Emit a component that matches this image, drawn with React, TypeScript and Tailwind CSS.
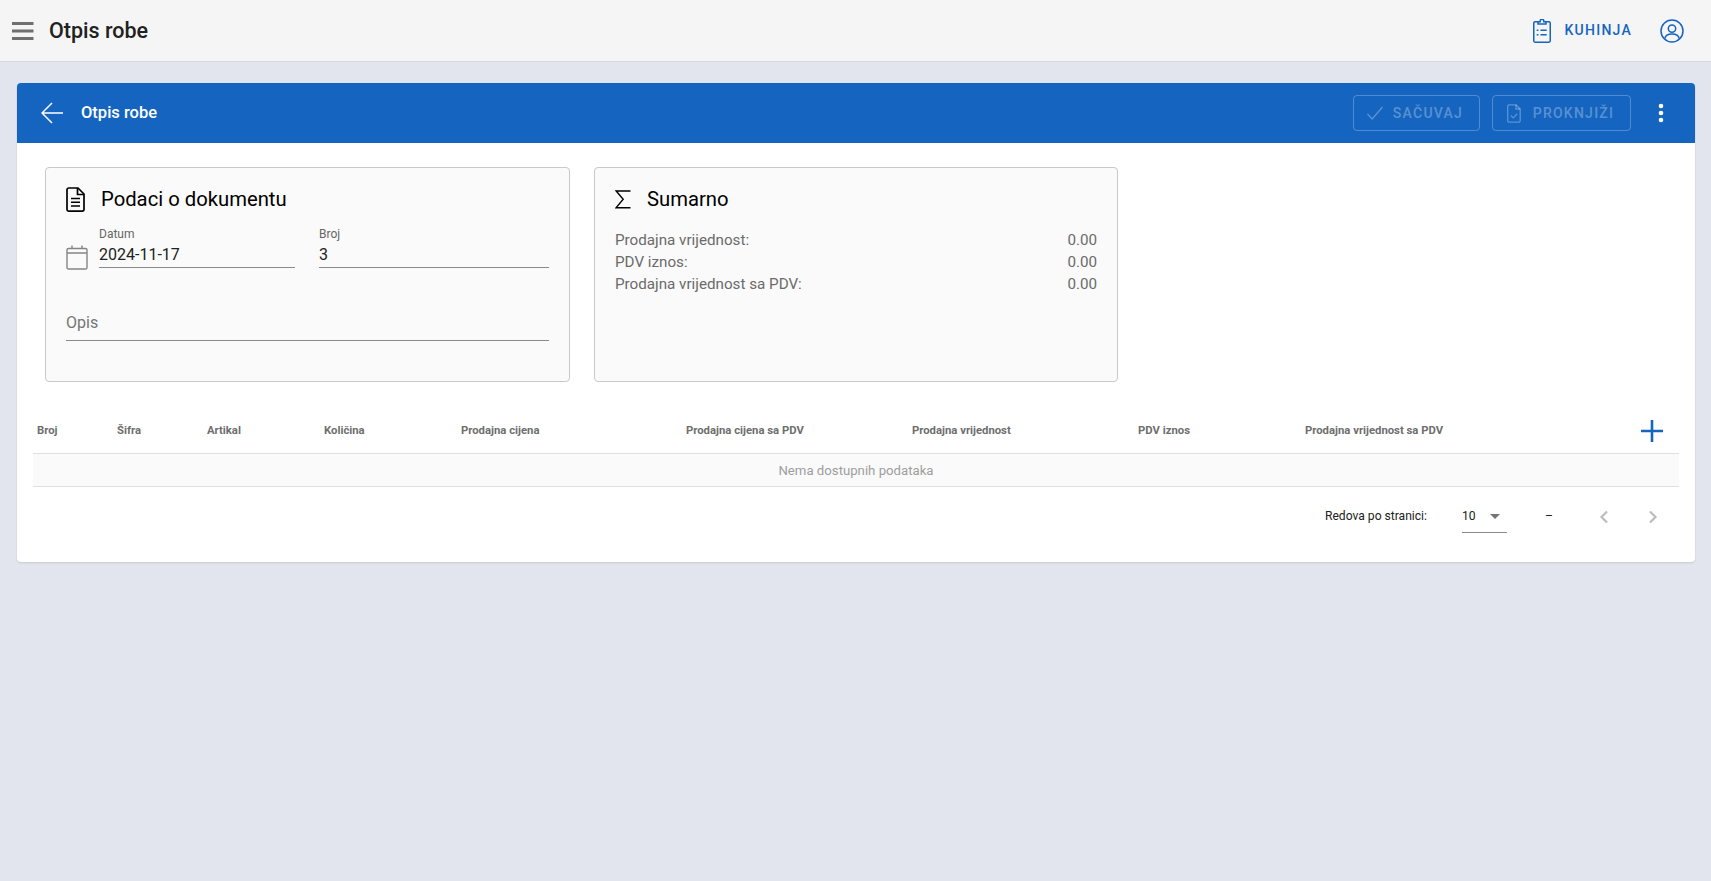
import React from "react";

const Hamburger = () => (
  <svg width="22" height="18" viewBox="0 0 22 18" className="shrink-0">
    <path d="M0 1.5h21.5M0 9h21.5M0 16.5h21.5" stroke="#6f6f6f" strokeWidth="3" fill="none" />
  </svg>
);

const ClipboardIcon = () => (
  <svg width="18" height="24" viewBox="0 0 18 24" fill="none" stroke="#1565c0" strokeWidth="1.5" className="shrink-0">
    <rect x="0.75" y="2.75" width="16.5" height="20.5" rx="1.4" />
    <path d="M5 2.75V5h8V2.75h-2.2V2a1.8 1.8 0 0 0-3.6 0v.75z" fill="#f5f5f5" />
    <path d="M7.5 11.2h6.2M7.5 15.8h6.2" />
    <path d="M3.7 11.2h1.7M3.7 15.8h1.7" />
  </svg>
);

const UserIcon = () => (
  <svg width="24" height="24" viewBox="0 0 24 24" fill="none" stroke="#1565c0" strokeWidth="1.5" className="shrink-0">
    <circle cx="12" cy="12" r="11" />
    <circle cx="12" cy="9.6" r="3.7" />
    <path d="M4.8 19.6c.5-3 3.4-4.6 7.2-4.6s6.7 1.6 7.2 4.6" />
  </svg>
);

const BackArrow = () => (
  <svg width="22" height="22" viewBox="0 0 22 22" fill="none" stroke="#ffffff" strokeWidth="1.5" className="shrink-0">
    <path d="M22 11H1M11 1L1 11l10 10" />
  </svg>
);

const CheckIcon = () => (
  <svg width="18" height="14" viewBox="0 0 18 14" fill="none" stroke="currentColor" strokeWidth="1.3" className="shrink-0">
    <path d="M1.5 8l4.7 5L16.5 1" />
  </svg>
);

const DocCheckIcon = () => (
  <svg width="14" height="19" viewBox="0 0 14 19" fill="none" stroke="currentColor" strokeWidth="1.3" className="shrink-0">
    <path d="M1.7.8H9l4.2 4.2v11.5a1.6 1.6 0 0 1-1.6 1.7H1.7A1.2 1.2 0 0 1 .7 17V2A1.2 1.2 0 0 1 1.7.8z" />
    <path d="M9 .8V5h4.2" />
    <path d="M3.8 11.5l2.4 2.4 4-4.2" />
  </svg>
);

const KebabIcon = () => (
  <svg width="6" height="20" viewBox="0 0 6 20" fill="#ffffff" className="shrink-0">
    <circle cx="3" cy="3" r="2.3" />
    <circle cx="3" cy="10" r="2.3" />
    <circle cx="3" cy="17" r="2.3" />
  </svg>
);

const DocIcon = () => (
  <svg width="19" height="25" viewBox="0 0 19 25" fill="none" stroke="#000000" strokeWidth="1.7" className="shrink-0">
    <path d="M2.6 1H12l6 6v15.2a1.9 1.9 0 0 1-1.9 1.9H2.6A1.7 1.7 0 0 1 1 22.4V2.6A1.7 1.7 0 0 1 2.6 1z" />
    <path d="M11.5 1v6.5H18" />
    <path d="M5 11.5h9M5 15.3h9M5 19h9" strokeWidth="1.5" />
  </svg>
);

const CalendarIcon = () => (
  <svg width="22" height="25" viewBox="0 0 22 25" fill="none" stroke="#858585" strokeWidth="1.4" className="shrink-0">
    <rect x="1" y="3.5" width="20" height="20.5" rx="1.6" />
    <path d="M1 8h20M6 .5v3M16 .5v3" />
  </svg>
);

const SigmaIcon = () => (
  <svg width="16" height="19" viewBox="0 0 16 19" fill="none" stroke="#000000" strokeWidth="1.4" className="shrink-0">
    <path d="M15.5 1H1.2l7 8.3L1 17.8h14.5" />
  </svg>
);

const PlusIcon = () => (
  <svg width="22" height="22" viewBox="0 0 22 22" fill="none" stroke="#1565c0" strokeWidth="2.6" className="shrink-0">
    <path d="M11 0v22M0 11h22" />
  </svg>
);

const Chevron = ({ dir }: { dir: "left" | "right" }) => (
  <svg width="9" height="14" viewBox="0 0 9 14" fill="none" stroke="#bdbdbd" strokeWidth="2.2" className="shrink-0">
    <path d={dir === "left" ? "M8 1.5L2.5 7l5.5 5.5" : "M1 1.5L6.5 7 1 12.5"} />
  </svg>
);

const columns = [
  "Broj",
  "Šifra",
  "Artikal",
  "Količina",
  "Prodajna cijena",
  "Prodajna cijena sa PDV",
  "Prodajna vrijednost",
  "PDV iznos",
  "Prodajna vrijednost sa PDV",
];

const summary = ["Prodajna vrijednost:", "PDV iznos:", "Prodajna vrijednost sa PDV:"];

export default function App() {
  return (
    <div className="min-h-screen bg-[#e2e5ee] font-['Roboto',sans-serif] overflow-hidden">
      <header className="h-[62px] bg-[#f5f5f5] border-b border-[#d6d8de] flex items-center pl-3 pr-[27px]">
        <Hamburger />
        <h1 className="ml-[15px] text-[21.5px] font-medium text-[#212121] leading-none">Otpis robe</h1>
        <div className="ml-auto flex items-center">
          <ClipboardIcon />
          <span className="ml-[14px] text-[14px] font-medium tracking-[1.25px] text-[#1565c0]">KUHINJA</span>
          <div className="ml-[28px]">
            <UserIcon />
          </div>
        </div>
      </header>

      <main className="ml-[17px] mr-4 mt-[21px] h-[479px] bg-white rounded-[4px] shadow-[0_1px_2px_rgba(0,0,0,0.12)]">
        <div className="h-[60px] bg-[#1565c0] rounded-t-[4px] flex items-center pl-[24px] pr-[31px]">
          <BackArrow />
          <span className="ml-[18px] text-[16.5px] font-medium text-white">Otpis robe</span>
          <div className="ml-auto flex items-center text-white/30">
            <button className="h-[36px] w-[127px] border border-white/25 rounded-[4px] flex items-center justify-center gap-[9px] pr-[4px] text-[14px] font-medium tracking-[1.25px]">
              <CheckIcon />
              <span>SAČUVAJ</span>
            </button>
            <button className="ml-3 h-[36px] w-[139px] border border-white/25 rounded-[4px] flex items-center justify-center gap-[12px] pr-[2px] text-[14px] font-medium tracking-[1.25px]">
              <DocCheckIcon />
              <span>PROKNJIŽI</span>
            </button>
            <div className="ml-[27px]">
              <KebabIcon />
            </div>
          </div>
        </div>

        <div className="flex gap-6 pl-[28px] pt-6">
          <section className="w-[525px] h-[215px] bg-[#fafafa] border border-[#c9c9c9] rounded-[4px] px-5">
            <div className="flex items-center mt-[18px] h-[26px]">
              <DocIcon />
              <h2 className="ml-[16px] text-[20.25px] text-black leading-none">Podaci o dokumentu</h2>
            </div>
            <div className="flex mt-[15px]">
              <div className="flex items-end w-[229px]">
                <div className="mb-[-2px]">
                  <CalendarIcon />
                </div>
                <div className="ml-[11px] w-[196px] border-b border-[#8a8a8a] h-[41px]">
                  <div className="text-[12px] leading-[14px] text-[#666666]">Datum</div>
                  <div className="text-[16px] leading-[24px] text-[#212121] mt-[2px]">2024-11-17</div>
                </div>
              </div>
              <div className="ml-[24px] w-[230px] border-b border-[#8a8a8a] h-[41px]">
                <div className="text-[12px] leading-[14px] text-[#666666]">Broj</div>
                <div className="text-[16px] leading-[24px] text-[#212121] mt-[2px]">3</div>
              </div>
            </div>
            <div className="mt-[39px] w-[483px] h-[34px] pt-[4px] border-b border-[#8a8a8a] text-[16px] leading-[24px] text-[#757575]">
              Opis
            </div>
          </section>

          <section className="w-[524px] h-[215px] bg-[#fafafa] border border-[#c9c9c9] rounded-[4px] px-5">
            <div className="flex items-center mt-[18px] h-[26px]">
              <SigmaIcon />
              <h2 className="ml-[16px] text-[20.25px] text-black leading-none">Sumarno</h2>
            </div>
            <div className="mt-[17px] text-[15.2px] leading-[22px] text-[#6b6b6b]">
              {summary.map((label) => (
                <div key={label} className="flex justify-between">
                  <span>{label}</span>
                  <span>0.00</span>
                </div>
              ))}
            </div>
          </section>
        </div>

        <div className="ml-[16px] mr-[16px] mt-[25px]">
          <div className="relative h-[47px] pt-[2px] border-b border-[#e0e0e0] grid grid-cols-[80px_90px_117px_137px_225px_226px_226px_167px_378px] items-center text-[11.3px] font-bold text-[#6e6e6e]">
            {columns.map((c) => (
              <div key={c} className="pl-1">
                {c}
              </div>
            ))}
            <div className="absolute right-[16px] top-[13px]">
              <PlusIcon />
            </div>
          </div>
          <div className="h-[33px] bg-[#fafafa] border-b border-[#e0e0e0] flex items-center justify-center pt-[1px] text-[13.2px] text-[#9e9e9e]">
            Nema dostupnih podataka
          </div>
          <div className="h-[59px] flex items-center text-[12.1px] text-[#212121]">
            <span className="ml-[1292px]">Redova po stranici:</span>
            <div className="ml-[35px] w-[45px] h-[32px] mt-[1px] border-b border-[#8a8a8a] flex items-center">
              <span>10</span>
              <span className="ml-[14px] w-0 h-0 border-x-[5px] border-x-transparent border-t-[5px] border-t-[#757575]" />
            </div>
            <span className="ml-[38px]">–</span>
            <div className="ml-[46px]">
              <Chevron dir="left" />
            </div>
            <div className="ml-[41px]">
              <Chevron dir="right" />
            </div>
          </div>
        </div>
      </main>
    </div>
  );
}
